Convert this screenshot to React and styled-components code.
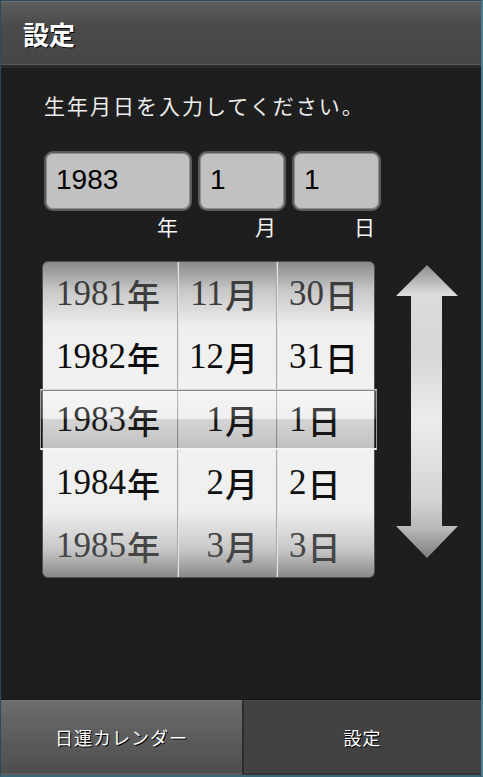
import React from "react";
import styled, { createGlobalStyle } from "styled-components";

const GlobalStyle = createGlobalStyle`
  html, body {
    margin: 0;
    padding: 0;
    background: #1e1e1e;
  }
  * {
    box-sizing: border-box;
  }
`;

const jp = `"Noto Sans CJK JP", "Liberation Sans", sans-serif`;

const Screen = styled.div`
  width: 483px;
  height: 777px;
  display: flex;
  flex-direction: column;
  background: #1e1e1e;
  border: 1px solid #2c4b5a;
  border-right: 2px solid #4d7d92;
  border-bottom: 2px solid #3c687c;
  font-family: ${jp};
`;

const Header = styled.header`
  height: 67px;
  flex-shrink: 0;
  display: flex;
  align-items: center;
  padding-left: 22px;
  background: linear-gradient(#5d5d5d, #4a4a4a 40%, #464646);
  border-top: 1px solid #6c6c6c;
  border-bottom: 3px solid #2a2a2a;
  box-shadow: inset 0 -1px 0 #5a5a5a;
`;

const Title = styled.h1`
  margin: 0;
  font-size: 26px;
  font-weight: 700;
  color: #fff;
  text-shadow: 1px 1px 0 #000;
`;

const Body = styled.main`
  flex: 1;
  padding: 22px 0 0 43px;
  display: flex;
  flex-direction: column;
`;

const Prompt = styled.p`
  margin: 0;
  font-size: 21px;
  line-height: 30px;
  color: #ececec;
  letter-spacing: 2px;
`;

const Fields = styled.div`
  display: grid;
  grid-template-columns: 148px 88px 89px;
  column-gap: 6px;
  margin-top: 31px;
`;

const Field = styled.div`
  height: 60px;
  border-radius: 9px;
  border: 2px solid #5b5b5b;
  background: #c1c1c1;
  box-shadow: inset 0 0 0 1px #8d8d8d;
  display: flex;
  align-items: center;
  padding: 0 0 3px 10px;
  font-family: "Liberation Sans", Arial, sans-serif;
  font-size: 28px;
  color: #000;
`;

const Unit = styled.span`
  justify-self: end;
  padding-right: ${(p) => p.$pad}px;
  margin-top: 2px;
  font-size: 21px;
  line-height: 26px;
  color: #f4f4f4;
`;

const PickerRow = styled.div`
  display: flex;
  align-items: flex-start;
  gap: 21px;
  margin-top: 22px;
  margin-left: -2px;
`;

const Picker = styled.div`
  position: relative;
  width: 333px;
  height: 317px;
  border: 1px solid #505050;
  border-radius: 6px;
  display: grid;
  grid-template-columns: 134px 99px 98px;
  background: linear-gradient(
    #8a8a8a 0%,
    #c8c8c8 9%,
    #efefef 21%,
    #f2f2f2 50%,
    #efefef 79%,
    #c8c8c8 91%,
    #8a8a8a 100%
  );
`;

const Column = styled.div`
  display: flex;
  flex-direction: column;
  align-items: ${(p) => p.$align};
  padding: ${(p) => p.$pad};
  border-left: ${(p) => (p.$first ? "none" : "1px solid #a8a8a8")};
  box-shadow: ${(p) => (p.$first ? "none" : "inset 1px 0 0 #e6e6e6")};
`;

const Cell = styled.div`
  height: 63px;
  display: flex;
  align-items: center;
  font-family: "Liberation Serif", "Times New Roman", serif;
  font-size: 35px;
  color: ${(p) => p.$color};
  white-space: nowrap;
`;

const Kanji = styled.span`
  font-family: ${jp};
  font-size: 33px;
  font-weight: 500;
  margin-left: 1px;
`;

const Band = styled.div`
  position: absolute;
  left: -3px;
  right: -3px;
  top: 128px;
  height: 60px;
  border-top: 1px solid #8a8a8a;
  border-bottom: 2px solid #f4f4f4;
  border-left: 1px solid #9a9a9a;
  border-right: 1px solid #9a9a9a;
  background: linear-gradient(
    rgba(255, 255, 255, 0.25) 0%,
    rgba(230, 230, 230, 0.15) 48%,
    rgba(0, 0, 0, 0.12) 50%,
    rgba(0, 0, 0, 0.2) 100%
  );
  box-shadow: 0 -1px 0 #d0d0d0;
  pointer-events: none;
`;

const ArrowWrap = styled.div`
  margin-top: 4px;
  width: 62px;
  height: 293px;
`;

const Footer = styled.footer`
  height: 76px;
  flex-shrink: 0;
  display: grid;
  grid-template-columns: 241px 1fr;
  border-top: 1px solid #151515;
`;

const FooterButton = styled.button`
  border: none;
  margin: 0;
  font-family: ${jp};
  font-size: 18px;
  color: #fff;
  text-shadow: 1px 1px 0 #000;
  letter-spacing: 1px;
  background: ${(p) =>
    p.$primary ? "linear-gradient(#6c6c6c, #4e4e4e)" : "#424242"};
  border-left: ${(p) => (p.$primary ? "none" : "2px solid #2c2c2c")};
  border-top: 1px solid ${(p) => (p.$primary ? "#7a7a7a" : "#4a4a4a")};
  border-bottom: 2px solid ${(p) => (p.$primary ? "#5c5c5c" : "#353535")};
  cursor: pointer;
`;

const years = ["1981", "1982", "1983", "1984", "1985"];
const months = ["11", "12", "1", "2", "3"];
const days = ["30", "31", "1", "2", "3"];
const shades = ["#3d3d3d", "#0c0c0c", "#1a1a1a", "#111111", "#454545"];

const DoubleArrow = () => (
  <svg width="62" height="293" viewBox="0 0 62 293">
    <defs>
      <linearGradient id="arrowFill" x1="0" y1="0" x2="0" y2="1">
        <stop offset="0" stopColor="#8c8c8c" />
        <stop offset="0.1" stopColor="#dcdcdc" />
        <stop offset="0.3" stopColor="#d6d6d6" />
        <stop offset="0.52" stopColor="#ececec" />
        <stop offset="0.8" stopColor="#d4d4d4" />
        <stop offset="0.9" stopColor="#b8b8b8" />
        <stop offset="1" stopColor="#7e7e7e" />
      </linearGradient>
    </defs>
    <polygon
      points="31,0 62,31 46,31 46,261 62,261 31,293 0,261 15,261 15,31 0,31"
      fill="url(#arrowFill)"
    />
  </svg>
);

export default function App() {
  return (
    <>
      <GlobalStyle />
      <Screen>
        <Header>
          <Title>設定</Title>
        </Header>
        <Body>
          <Prompt>生年月日を入力してください。</Prompt>
          <Fields>
            <Field>1983</Field>
            <Field>1</Field>
            <Field>1</Field>
            <Unit $pad={14}>年</Unit>
            <Unit $pad={10}>月</Unit>
            <Unit $pad={6}>日</Unit>
          </Fields>
          <PickerRow>
            <Picker>
              <Column $first $align="center" $pad="0 4px 0 0">
                {years.map((y, i) => (
                  <Cell key={y} $color={shades[i]}>
                    {y}
                    <Kanji>年</Kanji>
                  </Cell>
                ))}
              </Column>
              <Column $align="flex-end" $pad="0 18px 0 0">
                {months.map((m, i) => (
                  <Cell key={m} $color={shades[i]}>
                    {m}
                    <Kanji>月</Kanji>
                  </Cell>
                ))}
              </Column>
              <Column $align="flex-start" $pad="0 0 0 12px">
                {days.map((d, i) => (
                  <Cell key={d} $color={shades[i]}>
                    {d}
                    <Kanji>日</Kanji>
                  </Cell>
                ))}
              </Column>
              <Band />
            </Picker>
            <ArrowWrap>
              <DoubleArrow />
            </ArrowWrap>
          </PickerRow>
        </Body>
        <Footer>
          <FooterButton $primary>日運カレンダー</FooterButton>
          <FooterButton>設定</FooterButton>
        </Footer>
      </Screen>
    </>
  );
}
